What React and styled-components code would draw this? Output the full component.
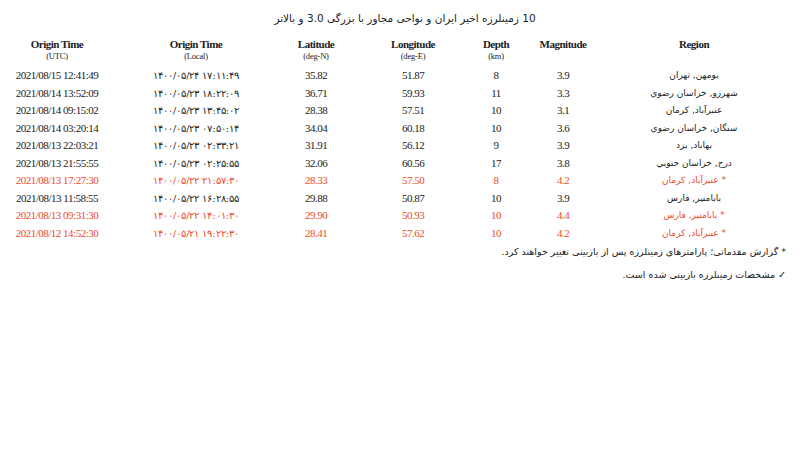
import React from "react";
import styled, { createGlobalStyle } from "styled-components";

const Global = createGlobalStyle`
  html, body { margin: 0; padding: 0; background: #fff; }
  body { padding: 8px; }
`;

const Page = styled.div`
  width: 784px;
  color: #222;
`;

const Title = styled.div`
  height: 20px;
  line-height: 20px;
  text-align: center;
  font-family: "DejaVu Sans", sans-serif;
  font-size: 10.5px;
  direction: rtl;
  margin-left: 10px;
`;

const Table = styled.table`
  margin-top: 9px;
  border-collapse: collapse;
  table-layout: fixed;
  width: 766px;
`;

const Th = styled.th`
  width: ${(p) => p.$w}px;
  padding: 0 0 5px;
  vertical-align: top;
  text-align: center;
  font-family: "Liberation Serif", serif;
  height: 25px;
`;

const HeadMain = styled.div`
  font-size: 11px;
  letter-spacing: -0.5px;
  font-weight: bold;
  line-height: 14px;
`;

const HeadSub = styled.div`
  font-size: 8.5px;
  letter-spacing: -0.2px;
  font-weight: normal;
  line-height: 11px;
`;

const Row = styled.tr`
  height: 17.5px;
  color: ${(p) => (p.$red ? "#ee4a2b" : "#222")};
`;

const Td = styled.td`
  padding: 0;
  text-align: center;
  font-family: "Liberation Serif", serif;
  font-size: 11px;
  letter-spacing: -0.5px;
  line-height: 17.5px;
  white-space: nowrap;
`;

const LocalTd = styled(Td)`
  font-family: "DejaVu Serif", "Liberation Serif", serif;
  font-size: 9.5px;
  letter-spacing: 0;
  direction: ltr;
`;

const RegionTd = styled(Td)`
  font-family: "DejaVu Sans", sans-serif;
  font-size: 9px;
  letter-spacing: 0;
  direction: rtl;
`;

const Footer = styled.div`
  direction: rtl;
  font-family: "DejaVu Sans", sans-serif;
  font-size: 9.5px;
  padding-right: 6px;
`;

const FootLine = styled.div`
  line-height: 20px;
  & + & { margin-top: 3px; }
`;

const heads = [
  ["Origin Time", "(UTC)", 98],
  ["Origin Time", "(Local)", 180],
  ["Latitude", "(deg-N)", 60],
  ["Longitude", "(deg-E)", 134],
  ["Depth", "(km)", 32],
  ["Magnitude", "", 102],
  ["Region", "", 160],
];

const rows = [
  ["2021/08/15 12:41:49", "۱۴۰۰/۰۵/۲۴ ۱۷:۱۱:۴۹", "35.82", "51.87", "8", "3.9", "بومهن, تهران", false],
  ["2021/08/14 13:52:09", "۱۴۰۰/۰۵/۲۳ ۱۸:۲۲:۰۹", "36.71", "59.93", "11", "3.3", "شهرزو, خراسان رضوي", false],
  ["2021/08/14 09:15:02", "۱۴۰۰/۰۵/۲۳ ۱۳:۴۵:۰۲", "28.38", "57.51", "10", "3.1", "عنبرآباد, كرمان", false],
  ["2021/08/14 03:20:14", "۱۴۰۰/۰۵/۲۳ ۰۷:۵۰:۱۴", "34.04", "60.18", "10", "3.6", "سنگان, خراسان رضوي", false],
  ["2021/08/13 22:03:21", "۱۴۰۰/۰۵/۲۳ ۰۲:۳۳:۲۱", "31.91", "56.12", "9", "3.9", "بهاباد, يزد", false],
  ["2021/08/13 21:55:55", "۱۴۰۰/۰۵/۲۳ ۰۲:۲۵:۵۵", "32.06", "60.56", "17", "3.8", "درح, خراسان جنوبي", false],
  ["2021/08/13 17:27:30", "۱۴۰۰/۰۵/۲۲ ۲۱:۵۷:۳۰", "28.33", "57.50", "8", "4.2", "* عنبرآباد, كرمان", true],
  ["2021/08/13 11:58:55", "۱۴۰۰/۰۵/۲۲ ۱۶:۲۸:۵۵", "29.88", "50.87", "10", "3.9", "بابامنير, فارس", false],
  ["2021/08/13 09:31:30", "۱۴۰۰/۰۵/۲۲ ۱۴:۰۱:۳۰", "29.90", "50.93", "10", "4.4", "* بابامنير, فارس", true],
  ["2021/08/12 14:52:30", "۱۴۰۰/۰۵/۲۱ ۱۹:۲۲:۳۰", "28.41", "57.62", "10", "4.2", "* عنبرآباد, كرمان", true],
];

export default function App() {
  return (
    <Page>
      <Global />
      <Title>10 زمینلرزه اخیر ایران و نواحی مجاور با بزرگی 3.0 و بالاتر</Title>
      <Table>
        <thead>
          <tr>
            {heads.map(([m, s, w], i) => (
              <Th key={i} $w={w}>
                <HeadMain>{m}</HeadMain>
                {s && <HeadSub>{s}</HeadSub>}
              </Th>
            ))}
          </tr>
        </thead>
        <tbody>
          {rows.map((r, i) => (
            <Row key={i} $red={r[7]}>
              <Td>{r[0]}</Td>
              <LocalTd>{r[1]}</LocalTd>
              <Td>{r[2]}</Td>
              <Td>{r[3]}</Td>
              <Td>{r[4]}</Td>
              <Td>{r[5]}</Td>
              <RegionTd>{r[6]}</RegionTd>
            </Row>
          ))}
        </tbody>
      </Table>
      <Footer>
        <FootLine>* گزارش مقدماتی؛ پارامترهای زمینلرزه پس از بازبینی تغییر خواهند کرد.</FootLine>
        <FootLine>✓ مشخصات زمینلرزه بازبینی شده است.</FootLine>
      </Footer>
    </Page>
  );
}
